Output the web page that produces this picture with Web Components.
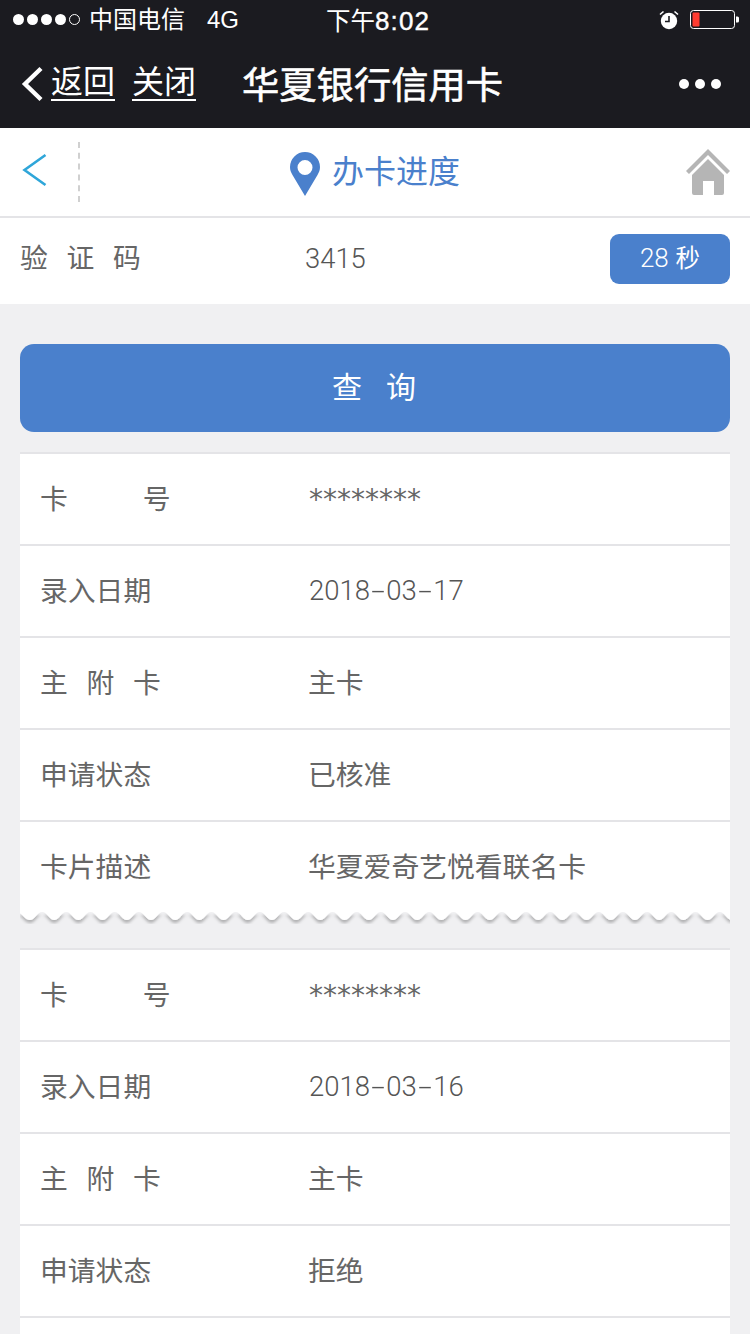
<!DOCTYPE html>
<html><head><meta charset="utf-8">
<style>
html,body{margin:0;padding:0;background:#f0f0f2;}
body{width:750px;height:1334px;overflow:hidden;font-family:"Liberation Sans","Noto Sans CJK SC",sans-serif;}
</style></head><body>
<app-statusbar></app-statusbar>
<app-navbar></app-navbar>
<page-header></page-header>
<code-row></code-row>
<query-button>查询</query-button>
<record-card wave>
  <info-row label="卡号" spacing="75" value="********"></info-row>
  <info-row label="录入日期" value="2018-03-17"></info-row>
  <info-row label="主附卡" spacing="18.700" value="主卡"></info-row>
  <info-row label="申请状态" value="已核准"></info-row>
  <info-row label="卡片描述" value="华夏爱奇艺悦看联名卡"></info-row>
</record-card>
<record-card>
  <info-row label="卡号" spacing="75" value="********"></info-row>
  <info-row label="录入日期" value="2018-03-16"></info-row>
  <info-row label="主附卡" spacing="18.700" value="主卡"></info-row>
  <info-row label="申请状态" value="拒绝"></info-row>
  <info-row cut></info-row>
</record-card>
<script>
function def(name,html){
  customElements.define(name,class extends HTMLElement{
    connectedCallback(){
      if(this.shadowRoot)return;
      const r=this.attachShadow({mode:'open'});
      r.innerHTML=typeof html==='function'?html(this):html;
    }
  });
}
function wavePath(){
  const P=24.2,W=710,A=8;
  let d=`M0 0V1.500C2 1.500 5 ${A} 10 ${A}`;
  for(let x=10;x<W;x+=P){
    const m=x+P/2,n=x+P;
    d+=`C${(x+5).toFixed(1)} ${A} ${(m-5).toFixed(1)} 0 ${m.toFixed(1)} 0C${(m+5).toFixed(1)} 0 ${(n-5).toFixed(1)} ${A} ${n.toFixed(1)} ${A}`;
  }
  return d+`V0Z`;
}
def('app-statusbar',`<style>
:host{display:flex;align-items:center;height:40px;background:#1b1b20;color:#fff;font-size:24px;position:relative;padding-left:13px;box-sizing:border-box;}
.dots{display:flex;gap:3px;margin-right:9px;margin-top:-2px}
.d{width:11px;height:11px;border-radius:50%;background:#fff;box-sizing:border-box}
.d.o{background:none;border:1px solid #fff}
.car{margin-right:22px;line-height:42px}
.net{font-size:24px;line-height:42px}
.time{position:absolute;left:326px;top:0;line-height:42px;font-size:24.500px;}
.time b{font-weight:400;font-size:26px;letter-spacing:1.100px;-webkit-text-stroke:.4px #fff}
.right{margin-left:auto;display:flex;align-items:center;gap:11px;padding-right:10px}
</style>
<div class="dots"><i class="d"></i><i class="d"></i><i class="d"></i><i class="d"></i><i class="d o"></i></div>
<span class="car">中国电信</span><span class="net">4G</span>
<span class="time">下午<b>8:02</b></span>
<div class="right">
<svg width="20" height="20" viewBox="0 0 20 20"><circle cx="10" cy="11" r="8.200" fill="#fff"/><path d="M10 6v5.500H6" fill="none" stroke="#1b1b20" stroke-width="1.600"/><path d="M1 4.500 4.500 1.500M19 4.500 15.500 1.500" stroke="#fff" stroke-width="1.600"/></svg>
<svg width="50" height="20" viewBox="0 0 50 20"><rect x=".5" y=".5" width="44" height="18" rx="3" fill="none" stroke="#fff"/><rect x="2.500" y="2.500" width="7" height="14" rx="1" fill="#ff3b30"/><path d="M46 6.500h1.500a1.500 1.500 0 0 1 1.500 1.500v3a1.500 1.500 0 0 1-1.500 1.500H46z" fill="#fff"/></svg>
</div>`);
def('app-navbar',`<style>
:host{display:flex;align-items:center;height:88px;background:#1b1b20;color:#fff;box-sizing:border-box;padding-left:21px;position:relative}
svg.b{margin-right:7px;margin-top:-1px;display:block}
a{font-size:32px;line-height:34px;color:#fff;text-decoration:none;border-bottom:2px solid #fff;height:34px;margin-top:-2px}
.c{margin-left:17px}
.t{margin-left:46px;font-size:37.300px;font-weight:400;-webkit-text-stroke:.6px #fff;margin-top:-2px}
.m{position:absolute;left:679px;top:39px;display:flex;gap:6px}
.m i{width:10px;height:10px;border-radius:50%;background:#fff}
</style>
<svg class="b" width="23" height="36" viewBox="0 0 23 36"><path d="M20 2.500 4 18l16 15.500" fill="none" stroke="#fff" stroke-width="4.400"/></svg>
<a>返回</a><a class="c">关闭</a><span class="t">华夏银行信用卡</span>
<div class="m"><i></i><i></i><i></i></div>`);
def('page-header',`<style>
:host{display:flex;align-items:center;justify-content:center;height:90px;background:#fff;border-bottom:2px solid #e4e4e7;box-sizing:border-box;position:relative}
.back{position:absolute;left:22px;top:25px}
.div{position:absolute;left:78px;top:14px;height:60px;border-left:2px dashed #d0d0d0}
.home{position:absolute;left:686px;top:21px}
.c{display:flex;align-items:center;gap:12px;color:#4a80cc;font-size:32px;line-height:44px;}
.c svg{margin-top:4px}
.c span{margin-top:-1px}
</style>
<svg class="back" width="26" height="34" viewBox="0 0 26 34"><path d="M23.500 2 2.500 17 23.500 32" fill="none" stroke="#2fa6d9" stroke-width="2.600"/></svg>
<div class="div"></div>
<div class="c"><svg width="30" height="44" viewBox="0 0 30 44"><path fill-rule="evenodd" d="M15 0a15 15 0 0 1 15 15c0 3-1 5.500-2.500 8L15 44 2.500 23C1 20.500 0 18 0 15A15 15 0 0 1 15 0Zm0 8a7.500 7.500 0 1 0 0 15 7.500 7.500 0 0 0 0-15Z" fill="#4a80cc"/></svg><span>办卡进度</span></div>
<svg class="home" width="44" height="47" viewBox="0 0 44 47"><path d="M22 0 44 22l-3 3L22 6 3 25l-3-3Z" fill="#b5b5b5"/><path fill-rule="evenodd" d="M22 10 38 26v18a2 2 0 0 1-2 2h-8V32H17v14H8a2 2 0 0 1-2-2V26Z" fill="#b5b5b5"/></svg>`);
def('code-row',`<style>
:host{display:flex;align-items:center;height:86px;background:#fff;box-sizing:border-box;padding:0 20px 4px 20px;color:#666;font-size:27.800px}
.l{width:285px;letter-spacing:18.700px;margin-top:-6px}
.v{flex:1;font-family:Roboto,"Liberation Sans",sans-serif;font-weight:300;font-size:27.400px;margin-top:-1px;color:#555}
.b{width:120px;height:50px;border-radius:9px;background:#4a80cc;color:#fff;font-size:24.500px;display:flex;align-items:center;justify-content:center;}
.b span{margin-top:-5px;}
.b em{font-style:normal;font-family:Roboto,"Liberation Sans",sans-serif;font-weight:300;font-size:26px}
</style><span class="l">验证码</span><span class="v">3415</span><span class="b"><span><em>28</em> 秒</span></span>`);
def('query-button',`<style>
:host{display:flex;align-items:center;justify-content:center;height:88px;margin:40px 20px 20px;border-radius:14px;background:#4a80cc;color:#fff;font-size:30px;letter-spacing:24px;}
span{margin:-6px -22px 0 0}
</style><span><slot></slot></span>`);
def('record-card',(h)=>`<style>
:host{display:block;margin:0 20px;position:relative}
.w{display:block;margin-bottom:9px;height:27px}
</style><slot></slot>${h.hasAttribute('wave')?`<svg class="w" width="710" height="27" viewBox="0 0 710 27"><defs><filter id="s" x="-2%" y="-20%" width="104%" height="160%"><feDropShadow dx="0" dy="3" stdDeviation="1.800" flood-color="#000" flood-opacity=".26"/></filter></defs><path filter="url(#s)" fill="#fff" d="${wavePath()}"/></svg>`:''}`);
def('info-row',(h)=>{
 const sp=h.getAttribute('spacing')||0;
 const raw=h.getAttribute('value')||'';
 let v=raw, cls='v cjk';
 if(/^\*+$/.test(raw)) cls='v star';
 else if(/^[0-9-]+$/.test(raw)){cls='v num'; v=raw.replace(/-/g,'<span class="h">-</span>');}
 return `<style>
:host{display:flex;align-items:center;height:${h.hasAttribute('cut')?18:92}px;box-sizing:border-box;background:#fff;border-top:2px solid #e4e4e7;padding:0 0 0 20px;color:#666;font-size:27.800px;}
.l{width:269px;letter-spacing:${sp}px;white-space:nowrap;margin-top:-4px}
.v{white-space:nowrap;margin-top:-4px}
.cjk{margin-left:-1px}
.num{font-family:Roboto,"Liberation Sans",sans-serif;font-weight:300;font-size:27.500px;margin-top:-2px;color:#555}
.h{display:inline-block;width:16.300px;text-align:center;transform:scaleX(1.800)}
.star{font-family:"DejaVu Sans",sans-serif;font-size:28px;margin-top:0}
</style><span class="l">${h.getAttribute('label')||''}</span><span class="${cls}">${v}</span>`});
</script>
</body></html>
